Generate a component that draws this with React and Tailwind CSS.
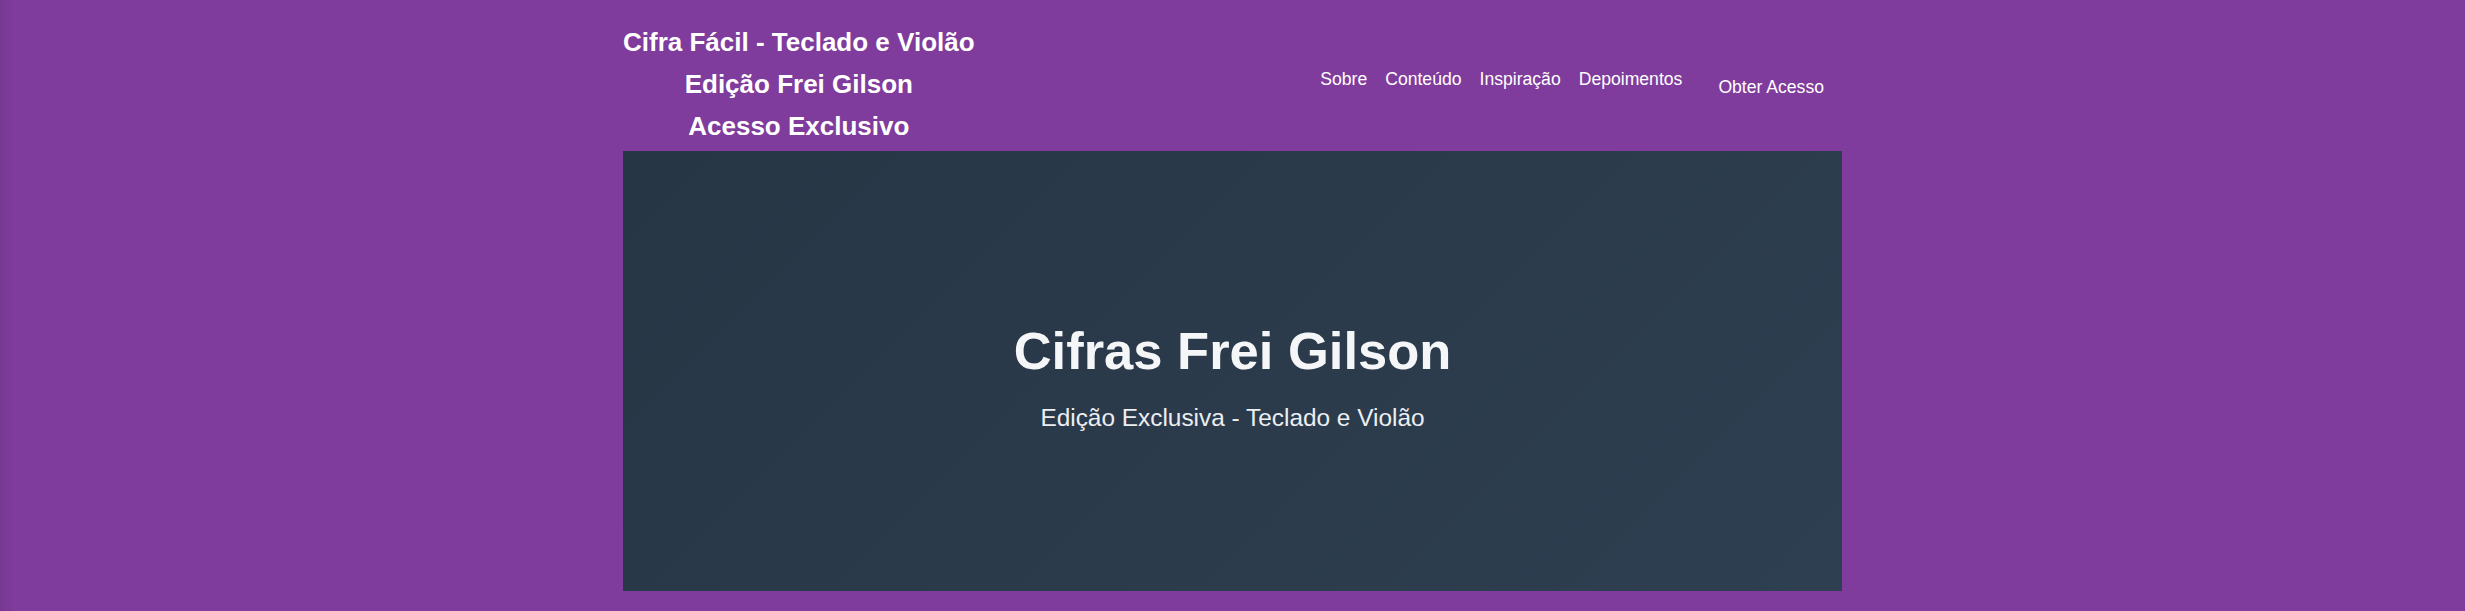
export default function App() {
  const links = ['Sobre', 'Conteúdo', 'Inspiração', 'Depoimentos'];

  return (
    <div
      className="min-h-[611px] bg-[#7f3c9c] bg-[linear-gradient(to_right,#763891,#7f3c9c_14px)] text-white"
      style={{ fontFamily: '"Liberation Sans", Arial, sans-serif' }}
    >
      <div className="mx-auto w-[1219px] pb-[20px]">
        {/* Header */}
        <header className="flex items-center justify-between pt-[21px] pb-[4px]">
          <div className="text-center text-[26px] font-bold leading-[42px]">
            <div>Cifra Fácil - Teclado e Violão</div>
            <div>Edição Frei Gilson</div>
            <div>Acesso Exclusivo</div>
          </div>
          <div className="mt-[6px] flex items-center">
            <nav className="mr-[18px] mb-[16px] flex gap-[18px] text-[17.6px]">
              {links.map((l) => (
                <a key={l} href="#" className="text-white">
                  {l}
                </a>
              ))}
            </nav>
            <button className="px-[18px] text-[17.6px] text-white">Obter Acesso</button>
          </div>
        </header>

        {/* Hero */}
        <section className="flex h-[440px] flex-col items-center justify-center bg-[linear-gradient(135deg,#273645,#2e3f51)] pt-[15px] text-center">
          <h1 className="text-[52.5px] font-bold leading-[60px] text-[#f5f6f8]">Cifras Frei Gilson</h1>
          <p className="mt-[19px] text-[24.4px] leading-[36px] text-[#eceef2]">Edição Exclusiva - Teclado e Violão</p>
        </section>
      </div>
    </div>
  );
}
